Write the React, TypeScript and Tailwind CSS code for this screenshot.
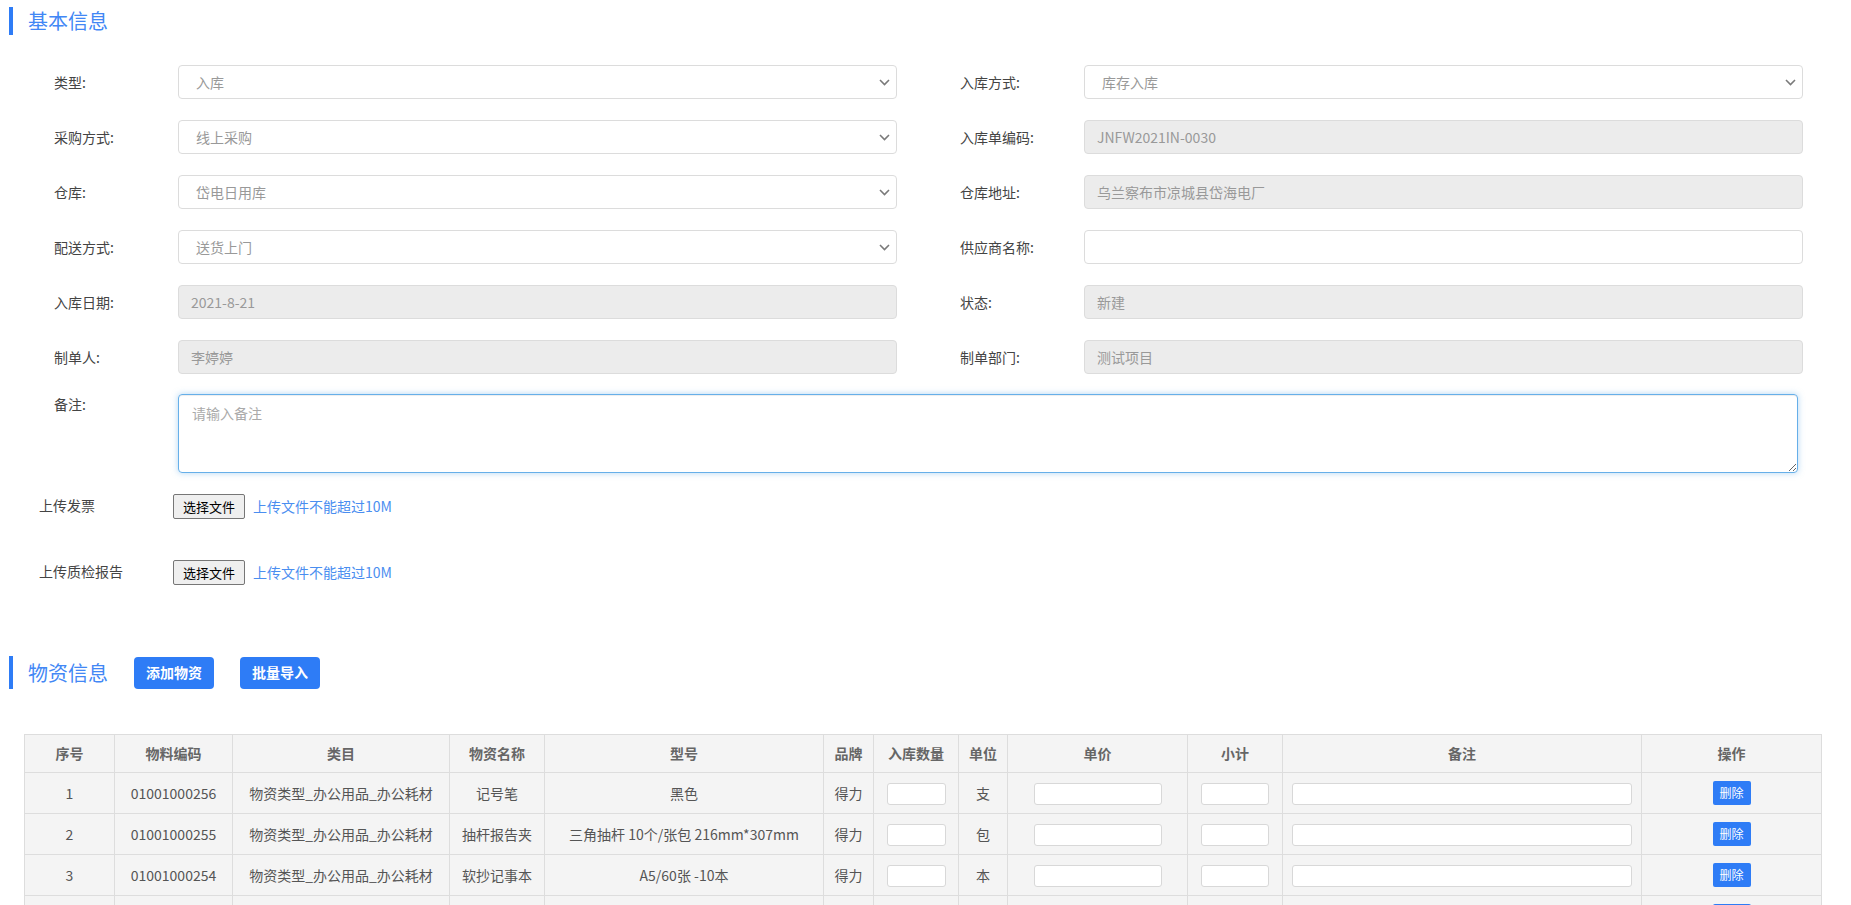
import React from "react";

type FieldDef = {
  label: string;
  kind: "select" | "disabled" | "input";
  value?: string;
};

const rows: [FieldDef, FieldDef][] = [
  [
    { label: "类型:", kind: "select", value: "入库" },
    { label: "入库方式:", kind: "select", value: "库存入库" },
  ],
  [
    { label: "采购方式:", kind: "select", value: "线上采购" },
    { label: "入库单编码:", kind: "disabled", value: "JNFW2021IN-0030" },
  ],
  [
    { label: "仓库:", kind: "select", value: "岱电日用库" },
    { label: "仓库地址:", kind: "disabled", value: "乌兰察布市凉城县岱海电厂" },
  ],
  [
    { label: "配送方式:", kind: "select", value: "送货上门" },
    { label: "供应商名称:", kind: "input", value: "" },
  ],
  [
    { label: "入库日期:", kind: "disabled", value: "2021-8-21" },
    { label: "状态:", kind: "disabled", value: "新建" },
  ],
  [
    { label: "制单人:", kind: "disabled", value: "李婷婷" },
    { label: "制单部门:", kind: "disabled", value: "测试项目" },
  ],
];

const items = [
  { no: "1", code: "01001000256", cat: "物资类型_办公用品_办公耗材", name: "记号笔", model: "黑色", brand: "得力", unit: "支", del: "删除" },
  { no: "2", code: "01001000255", cat: "物资类型_办公用品_办公耗材", name: "抽杆报告夹", model: "三角抽杆 10个/张包 216mm*307mm", brand: "得力", unit: "包", del: "删除" },
  { no: "3", code: "01001000254", cat: "物资类型_办公用品_办公耗材", name: "软抄记事本", model: "A5/60张 -10本", brand: "得力", unit: "本", del: "删除" },
  { no: "", code: "", cat: "", name: "", model: "", brand: "", unit: "", del: "" },
];

const Chevron = () => (
  <svg width="11" height="7" viewBox="0 0 11 7" fill="none">
    <path d="M1 1l4.5 4.5L10 1" stroke="#7a7a7a" strokeWidth="1.6" />
  </svg>
);

const Field = ({ f }: { f: FieldDef }) => (
  <div className="flex items-center">
    <div className="w-[124px] text-[14px] text-[#444]">{f.label}</div>
    {f.kind === "select" && (
      <div className="w-[719px] h-[34px] flex items-center justify-between pl-[17px] pr-[6px] border border-[#dcdcdc] rounded-[4px] bg-white text-[14px] text-[#999]">
        <span>{f.value}</span>
        <Chevron />
      </div>
    )}
    {f.kind === "disabled" && (
      <input
        disabled
        value={f.value}
        readOnly
        className="w-[719px] h-[34px] px-[12px] border border-[#dcdcdc] rounded-[4px] bg-[#ececec] text-[14px] text-[#999]"
      />
    )}
    {f.kind === "input" && (
      <input className="w-[719px] h-[34px] px-[12px] border border-[#dcdcdc] rounded-[4px] bg-white text-[14px] text-[#555] outline-none" />
    )}
  </div>
);

const SectionTitle = ({ title, h }: { title: string; h: string }) => (
  <>
    <div className={`w-[4px] ${h} bg-[#2e7cf6]`} />
    <div className="ml-[15px] text-[20px] leading-[28px] text-[#4287f5]">{title}</div>
  </>
);

const UploadRow = ({ label, className }: { label: string; className: string }) => (
  <div className={`flex items-center pl-[39px] h-[25px] ${className}`}>
    <div className="w-[134px] text-[14px] text-[#444] -mt-[3px]">{label}</div>
    <button className="w-[72px] h-[25px] border border-[#767676] rounded-[2px] bg-[#efefef] text-[13px] text-black">
      选择文件
    </button>
    <span className="ml-[8px] text-[14px] text-[#4a8ef0]">上传文件不能超过10M</span>
  </div>
);

const th = "border border-[#dddddd] font-semibold text-[14px] text-[#666]";
const td = "border border-[#dddddd] text-[14px] text-[#555]";
const cellInput = "h-[22px] border border-[#d8d8d8] rounded-[3px] bg-white align-middle";

export default function App() {
  return (
    <div className="min-h-screen bg-white font-['Noto_Sans_CJK_SC',sans-serif] pb-10">
      {/* 基本信息 */}
      <div className="flex items-center pl-[9px] pt-[7px]">
        <SectionTitle title="基本信息" h="h-[28px]" />
      </div>

      <div className="flex flex-col gap-[21px] mt-[30px]">
        {rows.map(([l, r], i) => (
          <div key={i} className="flex gap-[63px] pl-[54px]">
            <Field f={l} />
            <Field f={r} />
          </div>
        ))}
      </div>

      <div className="flex pl-[54px] mt-[20px]">
        <div className="w-[124px] text-[14px] leading-[20px] text-[#444]">备注:</div>
        <textarea
          placeholder="请输入备注"
          className="w-[1620px] h-[79px] px-[13px] py-[8px] border border-[#66afe9] rounded-[4px] text-[14px] text-[#555] placeholder:text-[#aaa] outline-none resize-y shadow-[inset_0_1px_1px_rgba(0,0,0,.075),0_0_6px_rgba(102,175,233,.5)]"
        />
      </div>

      <UploadRow label="上传发票" className="mt-[21px]" />
      <UploadRow label="上传质检报告" className="mt-[41px]" />

      {/* 物资信息 */}
      <div className="flex items-center pl-[9px] mt-[71px] h-[33px]">
        <SectionTitle title="物资信息" h="h-[33px]" />
        <button className="ml-[26px] w-[80px] h-[32px] rounded-[4px] bg-[#2e7cf6] text-white text-[14px] font-semibold">
          添加物资
        </button>
        <button className="ml-[26px] w-[80px] h-[32px] rounded-[4px] bg-[#2e7cf6] text-white text-[14px] font-semibold">
          批量导入
        </button>
      </div>

      <table className="mt-[45px] ml-[24px] w-[1797px] table-fixed border-collapse bg-[#f4f4f4] text-center">
        <colgroup>
          <col className="w-[90px]" />
          <col className="w-[118px]" />
          <col className="w-[217px]" />
          <col className="w-[95px]" />
          <col className="w-[279px]" />
          <col className="w-[50px]" />
          <col className="w-[85px]" />
          <col className="w-[49px]" />
          <col className="w-[180px]" />
          <col className="w-[95px]" />
          <col className="w-[359px]" />
          <col className="w-[180px]" />
        </colgroup>
        <thead>
          <tr className="h-[38px]">
            {["序号", "物料编码", "类目", "物资名称", "型号", "品牌", "入库数量", "单位", "单价", "小计", "备注", "操作"].map(
              (h) => (
                <th key={h} className={th}>
                  {h}
                </th>
              )
            )}
          </tr>
        </thead>
        <tbody>
          {items.map((it, i) => (
            <tr key={i} className="h-[41px]">
              <td className={td}>{it.no}</td>
              <td className={td}>{it.code}</td>
              <td className={td}>{it.cat}</td>
              <td className={td}>{it.name}</td>
              <td className={td}>{it.model}</td>
              <td className={td}>{it.brand}</td>
              <td className={td}>
                <input className={`w-[59px] ${cellInput}`} />
              </td>
              <td className={td}>{it.unit}</td>
              <td className={td}>
                <input className={`w-[128px] ${cellInput}`} />
              </td>
              <td className={td}>
                <input className={`w-[68px] ${cellInput}`} />
              </td>
              <td className={td}>
                <input className={`w-[340px] ${cellInput}`} />
              </td>
              <td className={td}>
                <button className="w-[38px] h-[24px] rounded-[2px] bg-[#2e7cf6] text-white text-[12px] align-middle">
                  {it.del}
                </button>
              </td>
            </tr>
          ))}
        </tbody>
      </table>
    </div>
  );
}
